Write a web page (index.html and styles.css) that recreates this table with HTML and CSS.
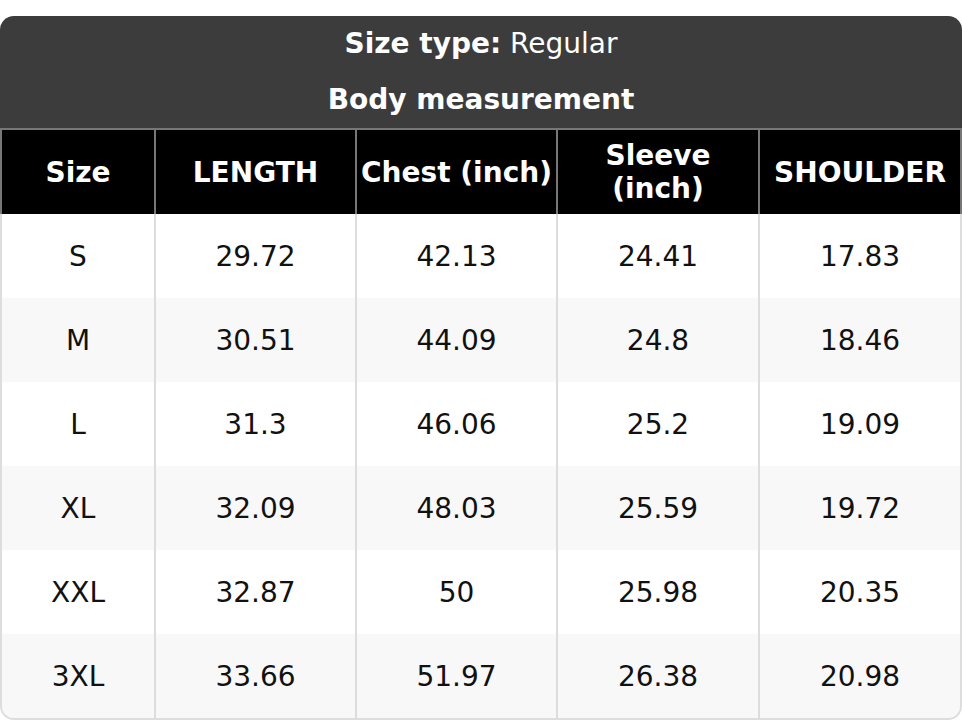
FILE: index.html
```html
<!DOCTYPE html>
<html>
<head>
<meta charset="utf-8">
<link rel="stylesheet" href="styles.css">
</head>
<body>
<div class="sheet">
  <div class="title">
    <div class="title-line"><b>Size type:</b> Regular</div>
    <div class="title-line"><b>Body measurement</b></div>
  </div>
  <div class="grid head">
    <div class="cell">Size</div>
    <div class="cell">LENGTH</div>
    <div class="cell">Chest (inch)</div>
    <div class="cell">Sleeve (inch)</div>
    <div class="cell">SHOULDER</div>
  </div>
  <div class="body">
    <div class="grid row"><div class="cell">S</div><div class="cell">29.72</div><div class="cell">42.13</div><div class="cell">24.41</div><div class="cell">17.83</div></div>
    <div class="grid row alt"><div class="cell">M</div><div class="cell">30.51</div><div class="cell">44.09</div><div class="cell">24.8</div><div class="cell">18.46</div></div>
    <div class="grid row"><div class="cell">L</div><div class="cell">31.3</div><div class="cell">46.06</div><div class="cell">25.2</div><div class="cell">19.09</div></div>
    <div class="grid row alt"><div class="cell">XL</div><div class="cell">32.09</div><div class="cell">48.03</div><div class="cell">25.59</div><div class="cell">19.72</div></div>
    <div class="grid row"><div class="cell">XXL</div><div class="cell">32.87</div><div class="cell">50</div><div class="cell">25.98</div><div class="cell">20.35</div></div>
    <div class="grid row alt"><div class="cell">3XL</div><div class="cell">33.66</div><div class="cell">51.97</div><div class="cell">26.38</div><div class="cell">20.98</div></div>
  </div>
</div>
</body>
</html>
```
FILE: styles.css
```css
html, body {
  margin: 0;
  padding: 0;
  background: #ffffff;
}
body {
  font-family: "DejaVu Sans", "Liberation Sans", sans-serif;
  font-size: 28px;
  color: #111111;
}
.sheet {
  margin-top: 16px;
  width: 962px;
}
.title {
  background: #3c3c3c;
  color: #ffffff;
  border-radius: 14px 14px 0 0;
  border-bottom: 2px solid #777777;
  text-align: center;
}
.title-line {
  height: 56px;
  line-height: 56px;
}
.grid {
  display: grid;
  grid-template-columns: 152px 199px 199px 200px 1fr;
  column-gap: 2px;
}
.head {
  background: #777777;
  border-left: 2px solid #777777;
  border-right: 2px solid #777777;
}
.head .cell {
  background: #000000;
  color: #ffffff;
  font-weight: bold;
  line-height: 33px;
  height: 84px;
  padding: 0 4px;
}
.body {
  border: 2px solid #dddddd;
  border-top: none;
  border-radius: 0 0 14px 14px;
  overflow: hidden;
}
.row {
  background: #dddddd;
}
.row .cell {
  background: #ffffff;
  height: 84px;
}
.row.alt .cell {
  background: #f8f8f8;
}
.cell {
  display: flex;
  align-items: center;
  justify-content: center;
  text-align: center;
  box-sizing: border-box;
}
```
